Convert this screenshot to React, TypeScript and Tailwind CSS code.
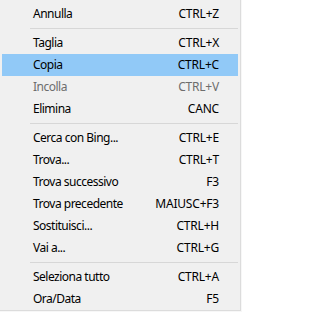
type Item = { label: string; shortcut: string; disabled?: boolean; active?: boolean } | "sep";

const ITEMS: Item[] = [
  { label: "Annulla", shortcut: "CTRL+Z" },
  "sep",
  { label: "Taglia", shortcut: "CTRL+X" },
  { label: "Copia", shortcut: "CTRL+C", active: true },
  { label: "Incolla", shortcut: "CTRL+V", disabled: true },
  { label: "Elimina", shortcut: "CANC" },
  "sep",
  { label: "Cerca con Bing...", shortcut: "CTRL+E" },
  { label: "Trova...", shortcut: "CTRL+T" },
  { label: "Trova successivo", shortcut: "F3" },
  { label: "Trova precedente", shortcut: "MAIUSC+F3" },
  { label: "Sostituisci...", shortcut: "CTRL+H" },
  { label: "Vai a...", shortcut: "CTRL+G" },
  "sep",
  { label: "Seleziona tutto", shortcut: "CTRL+A" },
  { label: "Ora/Data", shortcut: "F5" },
];

export default function App() {
  return (
    <div className="h-[312px] w-[242px] overflow-hidden bg-[#f7f7f7]">
      <div
        className="flex h-[311px] w-[241px] flex-col border-r border-b border-[#dcdcdc] bg-[#f0f0f0] pt-[3px] text-[12px] leading-none"
        style={{ fontFamily: '"Noto Sans", "Open Sans", sans-serif' }}
      >
        {ITEMS.map((item, i) =>
          item === "sep" ? (
            <div key={i} className="flex h-[7px] items-center pl-[30px] pr-[2px]">
              <div className="h-px w-full bg-[#d7d7d7]" />
            </div>
          ) : (
            <div
              key={i}
              className={`mx-[2px] flex h-[22px] items-center justify-between pl-[31px] pr-[19px] ${
                item.active ? "bg-[#91c9f7]" : ""
              } ${item.disabled ? "text-[#6d6d6d]" : "text-black"}`}
            >
              <span className="tracking-[-0.5px]">{item.label}</span>
              <span className="tracking-[-0.2px]">{item.shortcut}</span>
            </div>
          ),
        )}
      </div>
    </div>
  );
}
